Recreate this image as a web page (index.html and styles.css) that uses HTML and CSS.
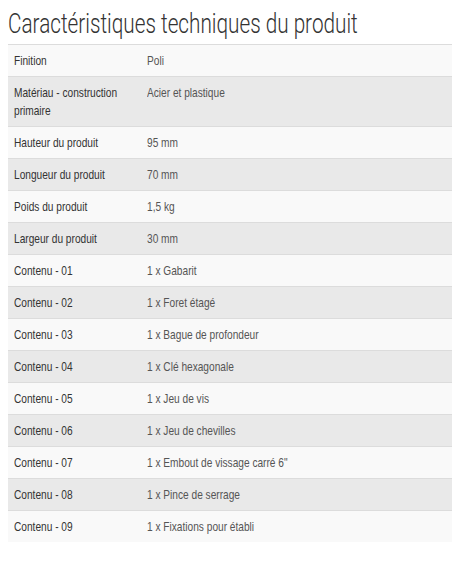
FILE: index.html
```html
<!DOCTYPE html>
<html lang="fr">
<head>
<meta charset="utf-8">
<link rel="stylesheet" href="styles.css">
</head>
<body>
<h2 class="title"><span class="title-text">Caractéristiques techniques du produit</span></h2>
<table class="specs">
<colgroup><col class="col-label"><col class="col-value"></colgroup>
<tbody>
<tr><th><span class="sx">Finition</span></th><td><span class="sx">Poli</span></td></tr>
<tr><th><span class="sx">Matériau - construction primaire</span></th><td><span class="sx">Acier et plastique</span></td></tr>
<tr><th><span class="sx">Hauteur du produit</span></th><td><span class="sx">95 mm</span></td></tr>
<tr><th><span class="sx">Longueur du produit</span></th><td><span class="sx">70 mm</span></td></tr>
<tr><th><span class="sx">Poids du produit</span></th><td><span class="sx">1,5 kg</span></td></tr>
<tr><th><span class="sx">Largeur du produit</span></th><td><span class="sx">30 mm</span></td></tr>
<tr><th><span class="sx">Contenu - 01</span></th><td><span class="sx">1 x Gabarit</span></td></tr>
<tr><th><span class="sx">Contenu - 02</span></th><td><span class="sx">1 x Foret étagé</span></td></tr>
<tr><th><span class="sx">Contenu - 03</span></th><td><span class="sx">1 x Bague de profondeur</span></td></tr>
<tr><th><span class="sx">Contenu - 04</span></th><td><span class="sx">1 x Clé hexagonale</span></td></tr>
<tr><th><span class="sx">Contenu - 05</span></th><td><span class="sx">1 x Jeu de vis</span></td></tr>
<tr><th><span class="sx">Contenu - 06</span></th><td><span class="sx">1 x Jeu de chevilles</span></td></tr>
<tr><th><span class="sx">Contenu - 07</span></th><td><span class="sx">1 x Embout de vissage carré 6"</span></td></tr>
<tr><th><span class="sx">Contenu - 08</span></th><td><span class="sx">1 x Pince de serrage</span></td></tr>
<tr><th><span class="sx">Contenu - 09</span></th><td><span class="sx">1 x Fixations pour établi</span></td></tr>
</tbody>
</table>
</body>
</html>
```
FILE: styles.css
```css
html, body {
  overflow: hidden;
}
body {
  margin: 8px;
  background: #fff;
  font-family: "Liberation Sans", Arial, sans-serif;
  color: #333;
}
.title {
  margin: 0;
  height: 36px;
  overflow: hidden;
  font-family: Roboto, "Liberation Sans", sans-serif;
  font-weight: 300;
  font-size: 28px;
  line-height: 32px;
  color: #333;
  white-space: nowrap;
}
.title-text {
  display: inline-block;
  transform: scaleX(0.74);
  transform-origin: 0 0;
}
.specs {
  width: 100%;
  table-layout: fixed;
  border-collapse: collapse;
  font-size: 13px;
  line-height: 18px;
}
.col-label {
  width: 133px;
}
.specs tr {
  border-top: 1px solid #dcdcdc;
}
.specs tr:nth-child(odd) {
  background: #f9f9f9;
}
.specs tr:nth-child(even) {
  background: #e9e9e9;
}
.specs th,
.specs td {
  padding: 7px 6px 6px;
  overflow: hidden;
  text-align: left;
  vertical-align: top;
  font-weight: 400;
}
.specs th {
  color: #333;
}
.specs td {
  color: #555;
}
.sx {
  display: inline-block;
  width: calc(100% / 0.78);
  transform: scaleX(0.78);
  transform-origin: 0 0;
  white-space: normal;
}
```
